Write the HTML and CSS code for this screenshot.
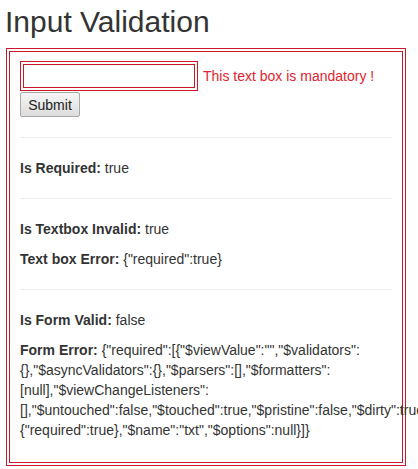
FILE: index.html
```html
<!DOCTYPE html>
<html lang="en">
<head>
<meta charset="utf-8">
<title>Input Validation</title>
<link rel="stylesheet" href="styles.css">
</head>
<body>
<h2 class="title">Input Validation</h2>
<form class="box" name="frm" novalidate>
  <div class="field-row">
    <input class="txt" type="text" name="txt">
    <span class="msg">This text box is mandatory !</span>
  </div>
  <div class="actions">
    <button class="btn" type="button">Submit</button>
  </div>
  <hr class="sep">
  <p class="line"><b>Is Required:</b> true</p>
  <hr class="sep">
  <p class="line"><b>Is Textbox Invalid:</b> true</p>
  <p class="line"><b>Text box Error:</b> {"required":true}</p>
  <hr class="sep">
  <p class="line"><b>Is Form Valid:</b> false</p>
  <p class="line"><b>Form Error:</b> {"required":[{"$viewValue":"","$validators":{},"$asyncValidators":{},"$parsers":[],"$formatters":[null],"$viewChangeListeners":[],"$untouched":false,"$touched":true,"$pristine":false,"$dirty":true,"$valid":false,"$invalid":true,"$error":{"required":true},"$name":"txt","$options":null}]}</p>
</form>
</body>
</html>
```
FILE: styles.css
```css
html, body {
  margin: 0;
  padding: 0;
  background: #fff;
}
body {
  padding: 0 6px;
  font-family: "Liberation Sans", Arial, Helvetica, sans-serif;
  font-size: 14px;
  line-height: 20px;
  color: #333;
}
.title {
  margin: 5px 0 10px -1px;
  font-size: 30px;
  font-weight: 500;
  line-height: 33px;
  color: #333;
}
.box {
  width: 400px;
  box-sizing: border-box;
  border: 4px double #c8192b;
  padding: 9px 10px 12px;
  margin: 0;
}
.field-row {
  display: flex;
  align-items: center;
}
.txt {
  box-sizing: border-box;
  width: 178px;
  height: 30px;
  margin: 0;
  padding: 2px 4px;
  border: 4px double #c8192b;
  background: #fff;
  font: 14px "Liberation Sans", Arial, sans-serif;
  outline: none;
}
.msg {
  margin-left: 5px;
  color: #e0242f;
}
.actions {
  margin-top: 1px;
}
.btn {
  box-sizing: border-box;
  height: 25px;
  width: 60px;
  margin: 0;
  padding: 0 7px;
  border: 1px solid #a9a9a9;
  border-radius: 2px;
  background: linear-gradient(#f6f6f6, #dcdcdc);
  font: 14px "Liberation Sans", Arial, sans-serif;
  color: #222;
}
.sep {
  margin: 20px 0;
  border: 0;
  border-top: 1px solid #eee;
  height: 0;
}
.line {
  margin: 0 0 10px;
}
.line b {
  font-weight: 700;
}
```
